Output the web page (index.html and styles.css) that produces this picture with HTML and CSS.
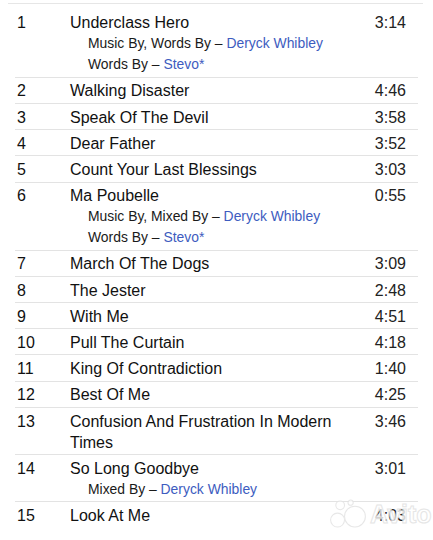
FILE: index.html
```html
<!DOCTYPE html>
<html lang="en">
<head>
    <meta charset="UTF-8">
    <meta name="viewport" content="width=device-width, initial-scale=1.0">
    <title>Tracklist</title>
    <link rel="stylesheet" href="styles.css">
</head>
<body>
    <div class="top-rule"></div>
    <div class="tracklist">
        <div class="track first">
            <div class="pos">1</div>
            <div class="info">
                <div class="title">Underclass Hero</div>
                <div class="credit">Music By, Words By – <span class="artist">Deryck Whibley</span></div>
                <div class="credit">Words By – <span class="artist">Stevo*</span></div>
            </div>
            <div class="dur">3:14</div>
        </div>
        <div class="track">
            <div class="pos">2</div>
            <div class="info"><div class="title">Walking Disaster</div></div>
            <div class="dur">4:46</div>
        </div>
        <div class="track">
            <div class="pos">3</div>
            <div class="info"><div class="title">Speak Of The Devil</div></div>
            <div class="dur">3:58</div>
        </div>
        <div class="track">
            <div class="pos">4</div>
            <div class="info"><div class="title">Dear Father</div></div>
            <div class="dur">3:52</div>
        </div>
        <div class="track">
            <div class="pos">5</div>
            <div class="info"><div class="title">Count Your Last Blessings</div></div>
            <div class="dur">3:03</div>
        </div>
        <div class="track">
            <div class="pos">6</div>
            <div class="info">
                <div class="title">Ma Poubelle</div>
                <div class="credit">Music By, Mixed By – <span class="artist">Deryck Whibley</span></div>
                <div class="credit">Words By – <span class="artist">Stevo*</span></div>
            </div>
            <div class="dur">0:55</div>
        </div>
        <div class="track">
            <div class="pos">7</div>
            <div class="info"><div class="title">March Of The Dogs</div></div>
            <div class="dur">3:09</div>
        </div>
        <div class="track">
            <div class="pos">8</div>
            <div class="info"><div class="title">The Jester</div></div>
            <div class="dur">2:48</div>
        </div>
        <div class="track">
            <div class="pos">9</div>
            <div class="info"><div class="title">With Me</div></div>
            <div class="dur">4:51</div>
        </div>
        <div class="track">
            <div class="pos">10</div>
            <div class="info"><div class="title">Pull The Curtain</div></div>
            <div class="dur">4:18</div>
        </div>
        <div class="track">
            <div class="pos">11</div>
            <div class="info"><div class="title">King Of Contradiction</div></div>
            <div class="dur">1:40</div>
        </div>
        <div class="track">
            <div class="pos">12</div>
            <div class="info"><div class="title">Best Of Me</div></div>
            <div class="dur">4:25</div>
        </div>
        <div class="track">
            <div class="pos">13</div>
            <div class="info"><div class="title">Confusion And Frustration In Modern Times</div></div>
            <div class="dur">3:46</div>
        </div>
        <div class="track">
            <div class="pos">14</div>
            <div class="info">
                <div class="title">So Long Goodbye</div>
                <div class="credit">Mixed By – <span class="artist">Deryck Whibley</span></div>
            </div>
            <div class="dur">3:01</div>
        </div>
        <div class="track last">
            <div class="pos">15</div>
            <div class="info"><div class="title">Look At Me</div></div>
            <div class="dur">4:03</div>
        </div>
    </div>

    <!-- faint watermark in the corner -->
    <div class="watermark">
        <svg width="40" height="30" viewBox="0 0 46 34">
            <circle cx="31" cy="20" r="12" fill="#fff" stroke="#e2e2e2" stroke-width="1.2"/>
            <circle cx="11" cy="24" r="8" fill="#fff" stroke="#e2e2e2" stroke-width="1.2"/>
            <circle cx="14" cy="7" r="5" fill="#fff" stroke="#e2e2e2" stroke-width="1.2"/>
            <circle cx="26" cy="4" r="3" fill="#fff" stroke="#e2e2e2" stroke-width="1.2"/>
        </svg>
        <span class="wm-text">Avito</span>
    </div>
</body>
</html>
```

FILE: styles.css
```css
body {
    margin: 0;
    background: #fff;
    font-family: "Liberation Sans", Arial, sans-serif;
    color: #111;
    position: relative;
    width: 433px;
    height: 540px;
    overflow: hidden;
}
.top-rule {
    margin: 3px 10px 0 8px;
    border-top: 1px solid #e6e6e6;
}
.tracklist {
    margin: 0 15px;
}
.track {
    display: grid;
    grid-template-columns: 53px 1fr auto;
    padding: 2.7px 12px 1.5px 2px;
    border-bottom: 1px solid #e3e3e3;
    font-size: 16px;
    line-height: 21px;
}
.track.first {
    padding-top: 8.3px;
}
.track.last {
    border-bottom: none;
}
.info {
    padding-right: 22px;
}
.credit {
    font-size: 13.9px;
    line-height: 21px;
    padding-left: 18px;
    color: #1a1a1a;
}
.artist {
    color: #3d5cc0;
}
.dur {
    text-align: right;
    color: #222;
}
.watermark {
    position: absolute;
    left: 328px;
    top: 499px;
    display: flex;
    align-items: center;
    opacity: 0.8;
}
.wm-text {
    font-size: 25px;
    font-weight: bold;
    color: #fff;
    margin-left: 2px;
    -webkit-text-stroke: 1px #e0e0e0;
}
```
